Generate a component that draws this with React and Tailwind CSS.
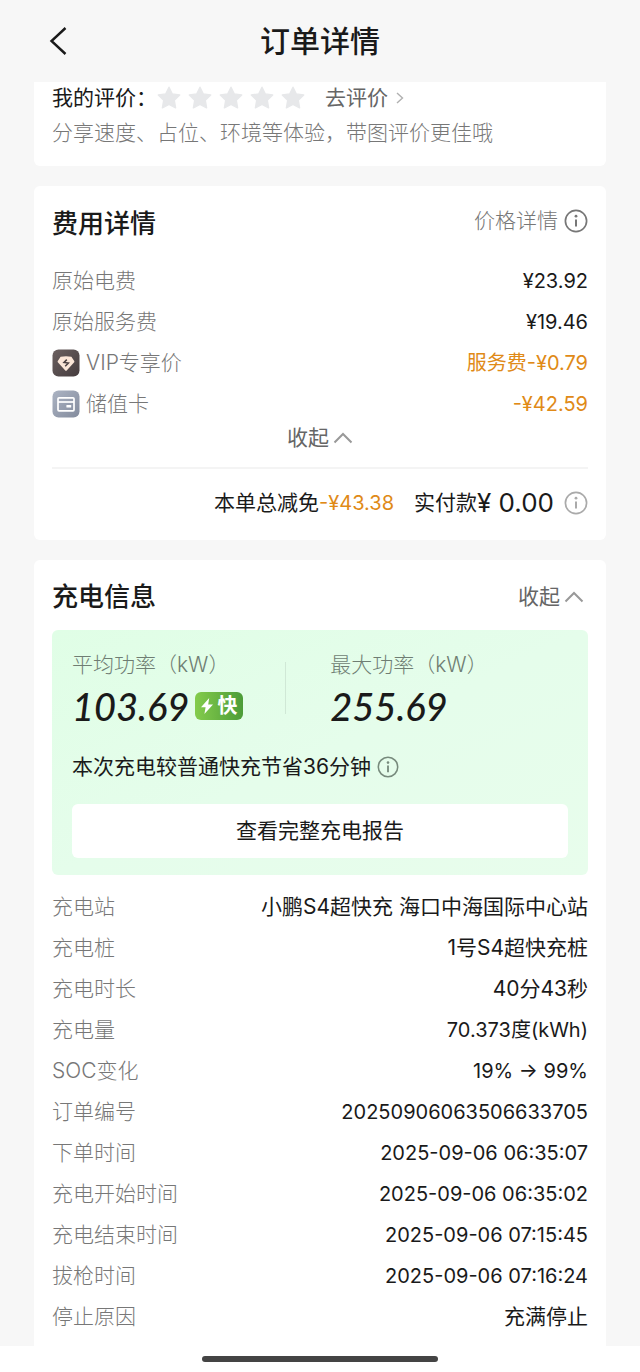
import React from "react";

const feeRows = [
  { label: "原始电费", value: "¥23.92", numeric: true },
  { label: "原始服务费", value: "¥19.46", numeric: true },
  { label: "VIP专享价", value: "服务费-¥0.79", icon: "vip", discount: true, numeric: true },
  { label: "储值卡", value: "-¥42.59", icon: "card", discount: true, numeric: true },
];

const chargeRows = [
  { label: "充电站", value: "小鹏S4超快充 海口中海国际中心站" },
  { label: "充电桩", value: "1号S4超快充桩" },
  { label: "充电时长", value: "40分43秒" },
  { label: "充电量", value: "70.373度(kWh)", numeric: true },
  { label: "SOC变化", value: "19% → 99%", numeric: true },
  { label: "订单编号", value: "20250906063506633705", numeric: true },
  { label: "下单时间", value: "2025-09-06 06:35:07", numeric: true },
  { label: "充电开始时间", value: "2025-09-06 06:35:02", numeric: true },
  { label: "充电结束时间", value: "2025-09-06 07:15:45", numeric: true },
  { label: "拔枪时间", value: "2025-09-06 07:16:24", numeric: true },
  { label: "停止原因", value: "充满停止" },
];

function InfoIcon({ className }) {
  return (
    <svg viewBox="0 0 24 24" className={className} fill="none" stroke="currentColor" aria-hidden="true">
      <circle cx="12" cy="12" r="10.6" strokeWidth="1.7" />
      <path d="M12 10.4v7.2" strokeWidth="2" />
      <circle cx="12" cy="7.2" r="1.4" fill="currentColor" stroke="none" />
    </svg>
  );
}

function ChevronUp() {
  return (
    <svg viewBox="0 0 20 14" className="h-3.5 w-5" fill="none" stroke="#999999" strokeWidth="2" aria-hidden="true">
      <path d="M1.5 11.5 10 3 18.5 11.5" />
    </svg>
  );
}

function Star() {
  return (
    <svg viewBox="0 0 24 24" className="size-6" fill="#e7e8ea" stroke="#e7e8ea" strokeWidth="1.4" strokeLinejoin="round" aria-hidden="true">
      <path d="M12 1.2 15.2 7.9 22.7 9 17.3 14.3 18.6 21.8 12 18.3 5.4 21.8 6.7 14.3 1.3 9 8.8 7.9Z" />
    </svg>
  );
}

function VipIcon() {
  return (
    <svg viewBox="0 0 28 28" className="size-7" aria-hidden="true">
      <defs>
        <linearGradient id="vipBg" x1="0" y1="0" x2="1" y2="1">
          <stop offset="0" stopColor="#6b6060" />
          <stop offset="1" stopColor="#453c3e" />
        </linearGradient>
      </defs>
      <rect x="0.5" y="0.5" width="27" height="27" rx="6" fill="url(#vipBg)" />
      <path d="M8.6 7.8c3.4-.8 7.4-.8 10.8 0l2.8 4.2c.3.4.3.9 0 1.3L14.7 21.6c-.4.5-1 .5-1.4 0L5.8 13.3c-.3-.4-.3-.9 0-1.3Z" fill="#fbe6d8" />
      <path d="M14.8 10.6 12 13.4 16.4 14 13.2 17.2" fill="none" stroke="#4a3f40" strokeWidth="1.5" />
    </svg>
  );
}

function CardIcon() {
  return (
    <svg viewBox="0 0 28 28" className="size-7" aria-hidden="true">
      <defs>
        <linearGradient id="cardBg" x1="0" y1="0" x2="1" y2="1">
          <stop offset="0" stopColor="#acb4c3" />
          <stop offset="1" stopColor="#838b9d" />
        </linearGradient>
      </defs>
      <rect x="0.5" y="0.5" width="27" height="27" rx="6" fill="url(#cardBg)" />
      <rect x="6" y="7.8" width="16" height="13" rx="1" fill="none" stroke="#fff" strokeWidth="1.7" />
      <path d="M6 12h16" stroke="#fff" strokeWidth="1.7" />
      <rect x="14.4" y="15" width="4.8" height="2.6" rx="0.6" fill="#fff" />
    </svg>
  );
}

function CollapseButton() {
  return (
    <button type="button" className="flex items-center gap-1 text-[#666666]">
      收起
      <ChevronUp />
    </button>
  );
}

function Row({ label, value, icon, discount, numeric }) {
  return (
    <div className="flex h-[41px] items-center justify-between">
      <dt className="flex items-center gap-1.5 font-light text-[#777777]">
        {icon === "vip" && <VipIcon />}
        {icon === "card" && <CardIcon />}
        {label}
      </dt>
      <dd className={`${numeric ? "text-xl" : ""} ${discount ? "text-[#e08a17]" : "text-[#1a1a1a]"}`}>{value}</dd>
    </div>
  );
}

export default function App() {
  return (
    <div className="min-h-screen bg-[#f7f7f7] font-['Inter','Noto_Sans_CJK_SC',sans-serif] text-[21px] leading-8 text-[#1a1a1a]">
      <header className="grid h-[82px] grid-cols-[1fr_auto_1fr] items-center px-[34px]">
        <button type="button" aria-label="返回" className="flex w-12 justify-center">
          <svg viewBox="0 0 18 28" className="h-7 w-[18px]" fill="none" stroke="#1a1a1a" strokeWidth="2.4" aria-hidden="true">
            <path d="M16.5 1 2.5 14 16.5 27" />
          </svg>
        </button>
        <h1 className="text-3xl font-medium">订单详情</h1>
      </header>

      <main className="mx-[34px]">
        {/* Rating */}
        <section className="rounded-b-md bg-white px-[18px] pb-4">
          <div className="flex h-8 items-center">
            <span>我的评价：</span>
            <div className="flex gap-[7px]">
              {[1, 2, 3, 4, 5].map((n) => (
                <Star key={n} />
              ))}
            </div>
            <a href="#review" className="ml-5 flex items-center gap-2 text-[#666666]">
              去评价
              <svg viewBox="0 0 8 12" className="h-3 w-2" fill="none" stroke="#b0b0b0" strokeWidth="1.4" aria-hidden="true">
                <path d="M1 1 6.5 6 1 11" />
              </svg>
            </a>
          </div>
          <p className="h-9 leading-[38px] font-light text-[#777777]">分享速度、占位、环境等体验，带图评价更佳哦</p>
        </section>

        {/* Fees */}
        <section className="mt-5 rounded-md bg-white px-[18px] pt-5 pb-[3px]">
          <div className="flex h-[34px] items-start justify-between">
            <h2 className="text-[26px] leading-9 font-medium">费用详情</h2>
            <button type="button" className="flex h-[30px] items-center gap-1.5 font-light text-[#777777]">
              价格详情
              <InfoIcon className="size-6" />
            </button>
          </div>
          <dl className="mt-5">
            {feeRows.map((row) => (
              <Row key={row.label} {...row} />
            ))}
          </dl>
          <div className="flex h-[45px] justify-center border-b-2 border-[#f4f4f4] pb-4">
            <CollapseButton />
          </div>
          <div className="flex h-[68px] items-center justify-end">
            <span>本单总减免</span>
            <span className="text-xl text-[#e08a17]">-¥43.38</span>
            <span className="ml-5">实付款</span>
            <span className="text-[26px]">¥ 0.00</span>
            <InfoIcon className="ml-2.5 size-6 text-[#aaaaaa]" />
          </div>
        </section>

        {/* Charging */}
        <section className="mt-5 rounded-t-md bg-white px-[18px] pt-5 pb-[9px]">
          <div className="flex h-[34px] items-center justify-between pr-1">
            <h2 className="text-[26px] font-medium">充电信息</h2>
            <CollapseButton />
          </div>

          <div className="mt-4 rounded-md bg-linear-to-br from-[#e0fee6] via-[#e5fdeb] to-[#e8fdec] px-5 pt-5 pb-[17px]">
            <div className="flex items-center">
              <div className="w-[43%]">
                <div className="h-[30px] leading-[30px] font-light text-[#6f7d73]">平均功率（kW）</div>
                <div className="flex h-[52px] items-center gap-1.5">
                  <span className="font-['Lato',sans-serif] text-[38px] font-medium italic">103.69</span>
                  <span className="flex h-7 items-center gap-1 rounded-md bg-linear-to-r from-[#84cc4c] to-[#4c9c38] px-1.5 text-xl font-bold text-white">
                    <svg viewBox="0 0 12 16" className="h-4 w-3" fill="#fff" aria-hidden="true">
                      <path d="M8.2 0 0 9.2h4.6L3.4 16 12 6.6H7.2Z" />
                    </svg>
                    快
                  </span>
                </div>
              </div>
              <div className="mb-1.5 h-[52px] w-px bg-[#d0e8d6]" />
              <div className="pl-11">
                <div className="h-[30px] leading-[30px] font-light text-[#6f7d73]">最大功率（kW）</div>
                <div className="flex h-[52px] items-center">
                  <span className="font-['Lato',sans-serif] text-[38px] font-medium italic">255.69</span>
                </div>
              </div>
            </div>
            <div className="mt-[18px] flex h-[34px] items-center gap-1.5">
              本次充电较普通快充节省36分钟
              <InfoIcon className="size-[22px] text-[#778a7c]" />
            </div>
            <button type="button" className="mt-5 h-[54px] w-full rounded-md bg-white">
              查看完整充电报告
            </button>
          </div>

          <dl className="mt-[11px]">
            {chargeRows.map((row) => (
              <Row key={row.label} {...row} />
            ))}
          </dl>
        </section>
      </main>

      <footer className="flex h-[26px] items-center justify-center bg-white">
        <div className="h-1.5 w-[37%] rounded-full bg-[#444444]" />
      </footer>
    </div>
  );
}
